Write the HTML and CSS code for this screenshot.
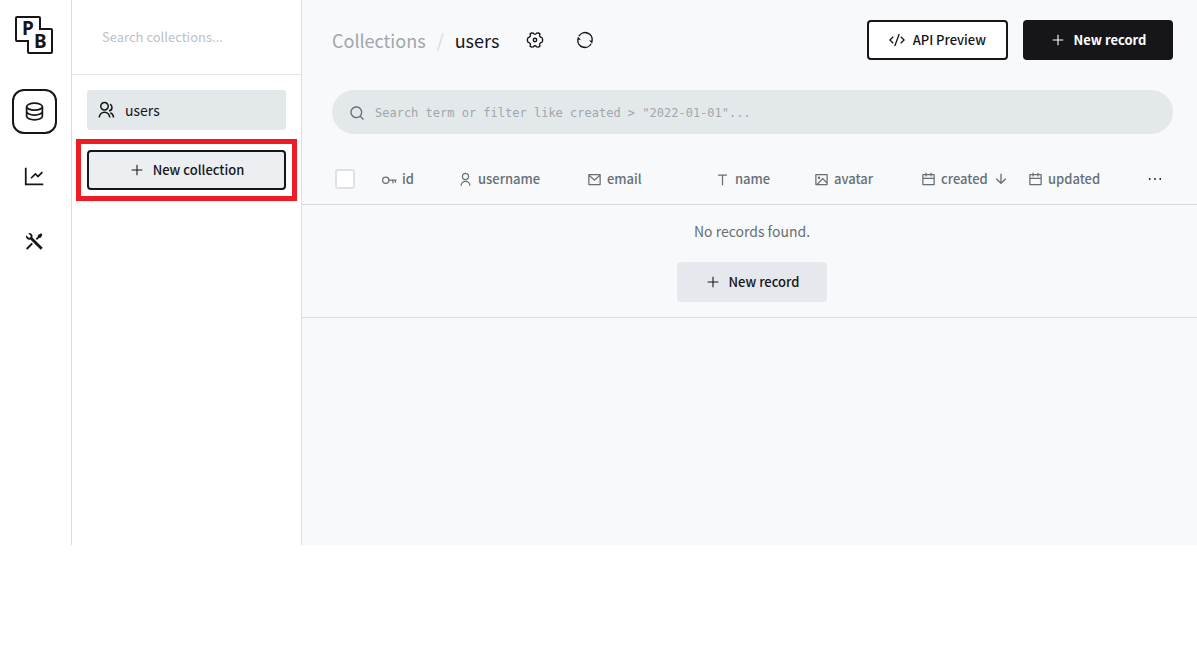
FILE: index.html
```html
<!DOCTYPE html>
<html lang="en">
<head>
<meta charset="utf-8">
<meta name="viewport" content="width=device-width, initial-scale=1">
<title>users - PocketBase</title>
<link rel="stylesheet" href="styles.css">
</head>
<body>
<svg class="sprite" aria-hidden="true">
  <symbol id="add" viewBox="0 0 24 24"><path d="M11.200 11.200V4h1.600v7.200H20v1.600h-7.200V20h-1.600v-7.200H4v-1.600z"/></symbol>
  <symbol id="user" viewBox="0 0 24 24"><path d="M4 22a8 8 0 1 1 16 0h-2a6 6 0 1 0-12 0H4zm8-9c-3.315 0-6-2.685-6-6s2.685-6 6-6 6 2.685 6 6-2.685 6-6 6zm0-2c2.21 0 4-1.79 4-4s-1.79-4-4-4-4 1.79-4 4 1.79 4 4 4z"/></symbol>
  <symbol id="calendar" viewBox="0 0 24 24"><path d="M17 3h4a1 1 0 0 1 1 1v16a1 1 0 0 1-1 1H3a1 1 0 0 1-1-1V4a1 1 0 0 1 1-1h4V1h2v2h6V1h2v2zm-2 2H9v2H7V5H4v4h16V5h-3v2h-2V5zm5 6H4v8h16v-8z"/></symbol>
</svg>
<div class="app">
  <nav class="rail" aria-label="Main">
    <a class="logo" href="#" aria-label="PocketBase">
      <svg viewBox="0 0 40 40"><path d="M3 2H25a1 1 0 0 1 1 1V14H37a1 1 0 0 1 1 1V37a1 1 0 0 1-1 1H15a1 1 0 0 1-1-1V26H3a1 1 0 0 1-1-1V3a1 1 0 0 1 1-1z"/><text x="8" y="20">P</text><text x="20" y="33">B</text></svg>
    </a>
    <a class="rail-link active" href="#" aria-label="Collections"><svg class="icon lg" viewBox="0 0 24 24"><g fill="none" stroke="currentColor" stroke-width="2"><ellipse cx="12" cy="6.500" rx="9" ry="4"/><path d="M3 6.500v11c0 2.200 4 4 9 4s9-1.800 9-4V6.500M3 12c0 2.200 4 4 9 4s9-1.800 9-4"/></g></svg></a>
    <a class="rail-link" href="#" aria-label="Logs"><svg class="icon lg" viewBox="0 0 24 24"><path d="M3 2v18h19v2H1V2h2zm17.293 4.293l1.414 1.414L16 13.414l-3-2.999-4.293 4.292-1.414-1.414L13 7.586l3 2.999 4.293-4.292z"/></svg></a>
    <a class="rail-link" href="#" aria-label="Settings"><svg class="icon lg" viewBox="1 1 22 22"><path d="M5.329 3.271a3.5 3.5 0 0 1 4.472 4.474L20.647 18.59l-2.122 2.121L7.68 9.867a3.5 3.5 0 0 1-4.472-4.474L5.444 7.63a1.5 1.5 0 1 0 2.121-2.121L5.329 3.27zm10.367 1.884l3.182-1.768 1.414 1.414-1.768 3.182-1.768.354-2.12 2.121-1.415-1.414 2.121-2.121.354-1.768zm-6.718 8.132l1.414 1.414-5.303 5.303a1 1 0 0 1-1.492-1.327l.078-.087 5.303-5.303z"/></svg></a>
  </nav>
  <aside class="sidebar">
    <div class="sidebar-search"><input type="text" placeholder="Search collections..." aria-label="Search collections"></div>
    <div class="sidebar-body">
      <a class="collection" href="#"><svg class="icon md" viewBox="0 0 24 24"><path d="M2 22a8 8 0 1 1 16 0h-2a6 6 0 1 0-12 0H2zm8-9c-3.315 0-6-2.685-6-6s2.685-6 6-6 6 2.685 6 6-2.685 6-6 6zm0-2c2.21 0 4-1.79 4-4s-1.79-4-4-4-4 1.79-4 4 1.79 4 4 4zm8.284 3.703A8.002 8.002 0 0 1 23 22h-2a6.001 6.001 0 0 0-3.537-5.473l.82-1.824zm-.688-11.29A5.5 5.5 0 0 1 21 8.5a5.499 5.499 0 0 1-5 5.478v-2.013a3.5 3.5 0 0 0 1.041-6.609l.555-1.943z"/></svg><span>users</span></a>
      <div class="highlight"><button class="btn btn-new-collection" type="button"><svg class="icon sm"><use href="#add"/></svg>New collection</button></div>
    </div>
  </aside>
  <main class="page">
    <header class="page-header">
      <div class="breadcrumbs"><a href="#">Collections</a><span class="slash">/</span><span class="current">users</span></div>
      <button class="round" type="button" aria-label="Edit collection"><svg class="icon md" viewBox="0 0 24 24"><g fill="none" stroke="currentColor" stroke-width="1.800" stroke-linejoin="round"><path d="M7.500 2.500L9.800 2.800Q12 6 14.200 2.800L16.500 2.500L18.600 3.800Q16.800 8.200 21.300 8.800L22.300 12L21.300 15.200Q16.800 15.800 18.600 20.200L16.500 21.500L14.200 21.200Q12 18 9.800 21.200L7.500 21.500L5.400 20.200Q7.200 15.800 2.700 15.200L1.700 12L2.700 8.800Q7.200 8.200 5.400 3.800z"/><circle cx="12" cy="12" r="2.300"/></g></svg></button>
      <button class="round" type="button" aria-label="Refresh"><svg class="icon md" viewBox="0 0 24 24"><path d="M3.800 7A9.500 9.500 0 0 1 21.500 13M20.200 17A9.500 9.500 0 0 1 2.500 11" fill="none" stroke="currentColor" stroke-width="1.900"/><path d="M2.500 7.500L6.500 11.500H1.500zM21.500 16.500L17.500 12.500H22.500z"/></svg></button>
      <div class="actions">
        <button class="btn btn-outline" type="button"><svg class="icon sm" viewBox="0 0 24 24"><path d="M24 12l-5.657 5.657-1.414-1.414L21.172 12l-4.243-4.243 1.414-1.414L24 12zM2.828 12l4.243 4.243-1.414 1.414L0 12l5.657-5.657L7.07 7.757 2.828 12zm6.96 9H7.66l6.552-18h2.128L9.788 21z"/></svg>API Preview</button>
        <button class="btn btn-primary" type="button"><svg class="icon sm"><use href="#add"/></svg>New record</button>
      </div>
    </header>
    <label class="searchbar">
      <svg class="icon sm" viewBox="0 0 24 24"><path d="M18.031 16.617l4.283 4.282-1.415 1.415-4.282-4.283A8.960 8.960 0 0 1 11 20c-4.968 0-9-4.032-9-9s4.032-9 9-9 9 4.032 9 9a8.960 8.960 0 0 1-1.969 5.617zm-2.006-.742A6.977 6.977 0 0 0 18 11c0-3.868-3.133-7-7-7-3.868 0-7 3.132-7 7 0 3.867 3.132 7 7 7a6.977 6.977 0 0 0 4.875-1.975l.15-.15z"/></svg>
      <input type="text" aria-label="Search records" placeholder="Search term or filter like created &gt; &quot;2022-01-01&quot;...">
    </label>
    <table class="records">
      <colgroup><col class="c-check"><col class="c-id"><col class="c-username"><col><col class="c-name"><col class="c-date"><col class="c-date"><col class="c-date"><col class="c-more"></colgroup>
      <thead>
        <tr>
          <th class="check"><input type="checkbox" aria-label="Select all"></th>
          <th><span class="col"><svg class="icon th" viewBox="0 0 24 24"><g fill="none" stroke="currentColor" stroke-width="2"><circle cx="6" cy="13" r="5"/><path d="M11 13H23M17.500 13v5M21.500 13v4"/></g></svg>id</span></th>
          <th><span class="col"><svg class="icon th"><use href="#user"/></svg>username</span></th>
          <th><span class="col"><svg class="icon th" viewBox="0 0 24 24"><path d="M3 3h18a1 1 0 0 1 1 1v16a1 1 0 0 1-1 1H3a1 1 0 0 1-1-1V4a1 1 0 0 1 1-1zm17 4.238l-7.928 7.1L4 7.216V19h16V7.238zM4.511 5l7.55 6.662L19.502 5H4.511z"/></svg>email</span></th>
          <th><span class="col"><svg class="icon th" viewBox="0 0 24 24"><path d="M13 6v15h-2V6H5V4h14v2z"/></svg>name</span></th>
          <th><span class="col"><svg class="icon th" viewBox="0 0 24 24"><path d="M4.828 21l-.02.02-.021-.02H2.992A.993.993 0 0 1 2 20.007V3.993A1 1 0 0 1 2.992 3h18.016c.548 0 .992.445.992.993v16.014a1 1 0 0 1-.992.993H4.828zM20 15V5H4v14L14 9l6 6zm0 2.828l-6-6L6.828 19H20v-1.172zM8 11a2 2 0 1 1 0-4 2 2 0 0 1 0 4z"/></svg>avatar</span></th>
          <th><span class="col"><svg class="icon th"><use href="#calendar"/></svg>created<svg class="icon sm" viewBox="0 0 24 24"><path d="M13 16.172l5.364-5.364 1.414 1.414L12 20l-7.778-7.778 1.414-1.414L11 16.172V4h2v12.172z"/></svg></span></th>
          <th><span class="col"><svg class="icon th"><use href="#calendar"/></svg>updated</span></th>
          <th class="more"><button class="more-btn" type="button" aria-label="Toggle columns"><svg class="icon md" viewBox="0 0 24 24"><circle cx="5" cy="12" r="1.200"/><circle cx="12" cy="12" r="1.200"/><circle cx="19" cy="12" r="1.200"/></svg></button></th>
        </tr>
      </thead>
      <tbody>
        <tr><td colspan="9"><p class="empty">No records found.</p><button class="btn btn-secondary" type="button"><svg class="icon sm"><use href="#add"/></svg>New record</button></td></tr>
      </tbody>
    </table>
  </main>
</div>
</body>
</html>
```
FILE: styles.css
```css
* { box-sizing: border-box; }

body {
  margin: 0;
  padding-bottom: 103px;
  background: #fff;
  color: #16161a;
  font: 14px/20px "Noto Sans CJK SC", sans-serif;
}

a { color: inherit; text-decoration: none; }
button, input { font: inherit; color: inherit; }
button { cursor: pointer; }
input { min-width: 0; }

.sprite { display: none; }
.icon { flex: none; fill: currentColor; display: block; }
.icon.sm { width: 16px; height: 16px; }
.icon.th { width: 15px; height: 15px; }
.icon.md { width: 18px; height: 18px; }
.icon.lg { width: 21px; height: 21px; }

.app { display: flex; min-height: calc(100vh - 103px); }

.rail {
  flex: none;
  width: 72px;
  padding: 15px 0 0 12px;
  border-right: 1px solid #d9dbe3;
  display: flex;
  flex-direction: column;
  align-items: flex-start;
  gap: 20px;
}
.logo { width: 40px; height: 40px; margin: 0 0 14px 2px; }
.logo svg { display: block; }
.logo path { fill: none; stroke: #16161a; stroke-width: 2; }
.logo text { font: bold 19px "Noto Sans", sans-serif; fill: #16161a; }
.rail-link {
  width: 45px;
  height: 45px;
  border: 2px solid transparent;
  border-radius: 12px;
  display: grid;
  place-items: center;
}
.rail-link.active { border-color: #16161a; }

.sidebar { flex: none; width: 230px; border-right: 1px solid #d9dfe6; }
.sidebar-search {
  height: 75px;
  padding: 0 30px;
  border-bottom: 1px solid #dde5ea;
  display: flex;
  align-items: center;
}
.sidebar-search input { width: 100%; padding: 0; border: 0; outline: 0; font-size: 13px; }
.sidebar-search input::placeholder { color: #bcbfc5; opacity: 1; }
.sidebar-body { padding: 15px; display: grid; gap: 20px; }
.collection {
  height: 40px;
  padding: 0 10px;
  border-radius: 3px;
  background: #e3e9eb;
  display: flex;
  align-items: center;
  gap: 10px;
}
.highlight { outline: 5px solid #ee1c25; outline-offset: 6px; }

.btn {
  min-width: 150px;
  height: 40px;
  padding: 0 20px;
  border: 0;
  border-radius: 4px;
  font-size: 13px;
  font-weight: 500;
  display: inline-flex;
  align-items: center;
  justify-content: center;
  gap: 8px;
}
.btn-new-collection { width: 100%; background: #ebeff2; border: 2px solid #16161a; }
.btn-outline { min-width: 0; background: #fff; border: 2px solid #16161a; }
.btn-primary { background: #16161a; color: #fff; font-weight: 700; }
.btn-secondary { background: #e5e8ed; }

.page { flex: 1; min-width: 0; background: #f8f9fb; }
.page-header { padding: 20px 24px 0 30px; display: flex; align-items: center; }
.breadcrumbs { display: flex; gap: 11px; font-size: 18px; margin-right: 16px; }
.breadcrumbs a { color: #a0a6ac; }
.slash { color: #d5d9dd; }
.round {
  width: 40px;
  height: 40px;
  margin-right: 10px;
  padding: 0;
  border: 0;
  background: none;
  display: grid;
  place-items: center;
}
.actions { margin-left: auto; display: flex; gap: 15px; }

.searchbar {
  height: 44px;
  margin: 30px 24px 20px 30px;
  padding: 1px 17px 0;
  border-radius: 22px;
  background: #e3e9eb;
  color: #666f75;
  display: flex;
  align-items: center;
  gap: 10px;
}
.searchbar input {
  flex: 1;
  padding: 0;
  border: 0;
  outline: 0;
  background: none;
  font: 12px/20px "DejaVu Sans Mono", monospace;
}
.searchbar input::placeholder { color: #a0a6ac; opacity: 1; }

.records { width: 100%; table-layout: fixed; border-collapse: separate; border-spacing: 0; }
.records th {
  height: 51px;
  padding: 0 0 0 10px;
  border-bottom: 1px solid #d3dbe3;
  color: #666f75;
  font-size: 13px;
  font-weight: 500;
  text-align: left;
}
.records td { padding: 16px 0 15px 5px; border-bottom: 1px solid #d9dde4; text-align: center; }
.c-check { width: 70px; }
.c-id { width: 76px; }
.c-username { width: 129px; }
.c-name { width: 99px; }
.c-date { width: 107px; }
.c-more { width: 72px; }
.col { display: flex; align-items: center; gap: 5px; }
.records .check { padding-left: 33px; }
.check input {
  appearance: none;
  display: block;
  width: 20px;
  height: 20px;
  margin: 0;
  border: 2px solid #dfe1e8;
  border-radius: 3px;
  background: #fff;
}
.more-btn { padding: 0; border: 0; background: none; color: #16161a; display: block; margin-left: 11px; }
.empty { margin: 0 0 21px; color: #666f75; }
```
